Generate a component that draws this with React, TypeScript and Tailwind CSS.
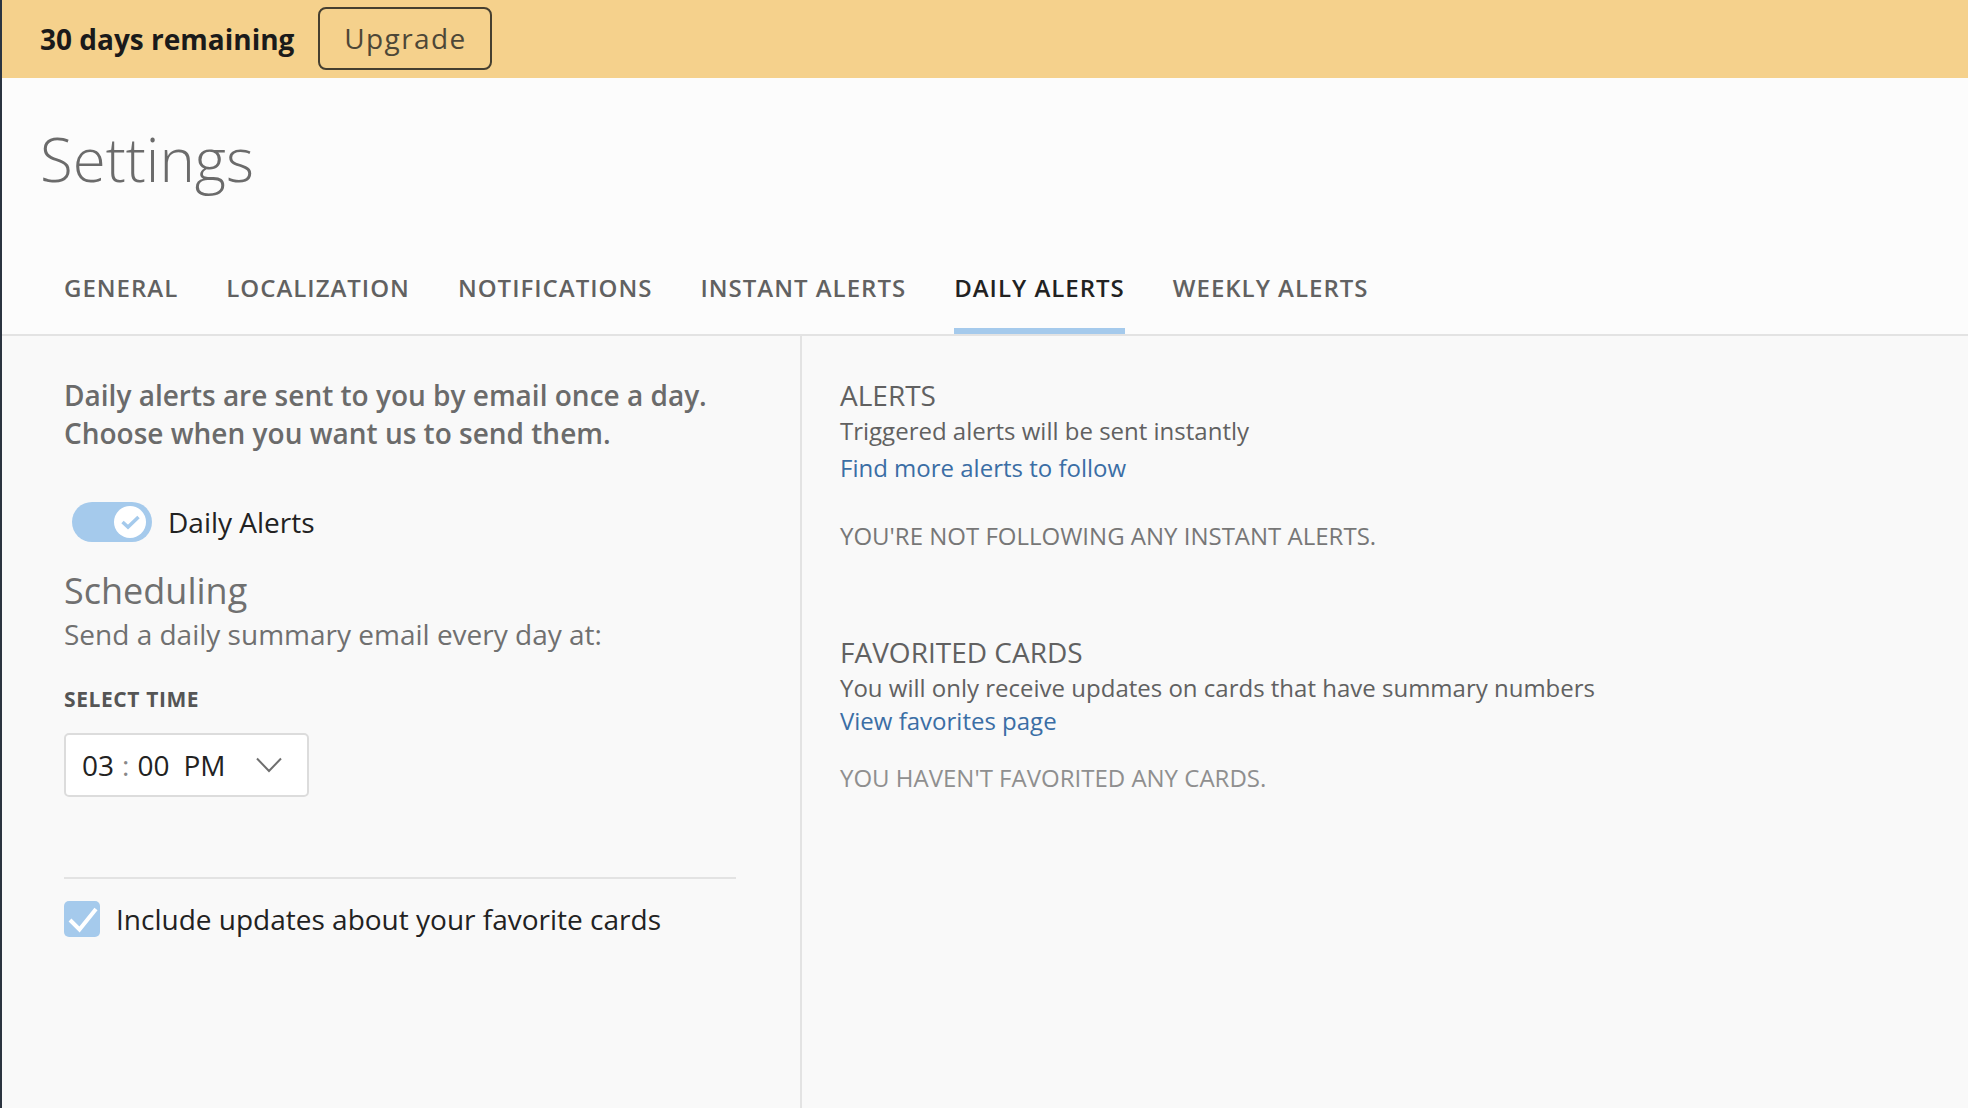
import React from 'react';

const tabs = ['GENERAL', 'LOCALIZATION', 'NOTIFICATIONS', 'INSTANT ALERTS', 'DAILY ALERTS', 'WEEKLY ALERTS'];

export default function App() {
  return (
    <div className="flex flex-col h-[1108px] overflow-hidden border-l-2 border-[#2b3440] bg-[#f9f9f9] font-['Open_Sans',sans-serif]">
      <div className="flex items-center h-[78px] pl-[38px] bg-[#f5d18c]">
        <span className="text-[28px] font-bold text-[#1a1a1a]">30 days remaining</span>
        <button className="ml-[24px] mb-[2px] w-[174px] h-[63px] rounded-[8px] border-2 border-[#453f30] text-[28px] font-medium tracking-[1.4px] text-[#4d4737]">Upgrade</button>
      </div>

      <div className="h-[258px] flex flex-col bg-[#fcfcfc] border-b-2 border-[#e3e3e3]">
        <h1 className="pl-[38px] pt-[45px] text-[60px] leading-[72px] font-light text-[#6b6b6b]">Settings</h1>
        <div className="flex gap-[48px] pl-[62px] mt-auto">
          {tabs.map((t) => (
            <div
              key={t}
              className={`h-[72px] pt-[9px] text-[24px] leading-[34px] font-[550] tracking-[1px] border-b-[6px] ${t === 'DAILY ALERTS' ? 'text-[#222222] border-[#a5caec]' : 'text-[#616161] border-transparent'}`}
            >
              {t}
            </div>
          ))}
        </div>
      </div>

      <div className="flex flex-1">
        <div className="w-[800px] shrink-0 pl-[62px] pr-[64px] pt-[40px] border-r-2 border-[#e3e3e3]">
          <p className="text-[28px] leading-[38px] font-semibold text-[#6b6b6b]">
            Daily alerts are sent to you by email once a day.
            <br />
            Choose when you want us to send them.
          </p>
          <div className="flex items-center mt-[50px] ml-[8px]">
            <div className="flex items-center justify-end w-[80px] h-[40px] pr-[6px] rounded-full bg-[#a5caec]">
              <div className="w-[32px] h-[32px] rounded-full bg-white">
                <svg viewBox="0 0 32 32" fill="none" stroke="#a5caec" strokeWidth="3.5" className="w-full h-full">
                  <path d="M8.5 16l5.5 5 10.5-10" />
                </svg>
              </div>
            </div>
            <span className="ml-[16px] text-[28px] leading-[40px] text-[#222222]">Daily Alerts</span>
          </div>
          <h2 className="mt-[27px] text-[36px] leading-[44px] text-[#707070]">Scheduling</h2>
          <p className="mt-[2px] text-[28px] leading-[38px] text-[#707070]">Send a daily summary email every day at:</p>
          <div className="mt-[31px] text-[21px] leading-[30px] font-bold tracking-[0.6px] text-[#555555]">SELECT TIME</div>
          <div className="flex items-center w-[245px] h-[64px] mt-[19px] pl-[16px] rounded-[5px] border-2 border-[#dcdcdc] bg-white text-[28px] text-[#222222]">
            <span>03</span>
            <span className="mx-[8px] text-[#888888]">:</span>
            <span>00</span>
            <span className="ml-[14px]">PM</span>
            <svg viewBox="0 0 26 16" fill="none" stroke="#6f6f6f" strokeWidth="2" className="ml-[31px] w-[26px] h-[16px]">
              <path d="M1 1.5l12 12.5L25 1.5" />
            </svg>
          </div>
          <div className="mt-[80px] pt-[21px] border-t-2 border-[#e3e3e3]">
            <div className="flex items-center">
              <div className="w-[36px] h-[36px] rounded-[5px] bg-[#a5caec]">
                <svg viewBox="0 0 36 36" fill="none" stroke="#ffffff" strokeWidth="4" className="w-full h-full">
                  <path d="M6 19l9.5 9.5L32 8" />
                </svg>
              </div>
              <span className="ml-[16px] text-[28px] leading-[38px] text-[#222222]">Include updates about your favorite cards</span>
            </div>
          </div>
        </div>

        <div className="flex-1 pl-[38px] pt-[40px]">
          <h3 className="text-[28px] leading-[38px] text-[#616161]">ALERTS</h3>
          <p className="text-[24px] leading-[34px] text-[#616161]">Triggered alerts will be sent instantly</p>
          <a className="block mt-[3px] text-[24px] leading-[34px] text-[#3b6ea5]">Find more alerts to follow</a>
          <p className="mt-[34px] text-[24px] leading-[34px] text-[#777777]">YOU'RE NOT FOLLOWING ANY INSTANT ALERTS.</p>
          <h3 className="mt-[80px] text-[28px] leading-[38px] text-[#616161]">FAVORITED CARDS</h3>
          <p className="text-[24px] leading-[33px] text-[#616161]">You will only receive updates on cards that have summary numbers</p>
          <a className="block text-[24px] leading-[33px] text-[#3b6ea5]">View favorites page</a>
          <p className="mt-[24px] text-[24px] leading-[34px] text-[#8f8f8f]">YOU HAVEN'T FAVORITED ANY CARDS.</p>
        </div>
      </div>
    </div>
  );
}
